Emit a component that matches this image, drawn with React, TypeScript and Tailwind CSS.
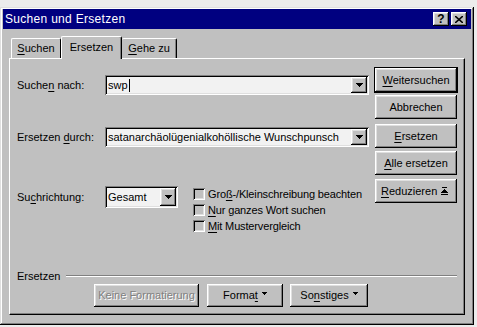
import React from "react";

const RAISED =
  "shadow-[inset_-1px_-1px_0_#000,inset_1px_1px_0_#fff,inset_-2px_-2px_0_#808080,inset_2px_2px_0_#dfdfdf]";

function U({ children }: { children: React.ReactNode }) {
  return <span className="underline underline-offset-[2px] decoration-[1px]">{children}</span>;
}

function Arrow() {
  return (
    <svg width="7" height="4" viewBox="0 0 7 4" className="block">
      <path d="M0 0h7v1H0zM1 1h5v1H1zM2 2h3v1H2zM3 3h1v1H3z" fill="#000" />
    </svg>
  );
}

function SmallArrow() {
  return (
    <svg width="5" height="3" viewBox="0 0 5 3" className="block ml-[4px] mt-[-4px]">
      <path d="M0 0h5v1H0zM1 1h3v1H1zM2 2h1v1H2z" fill="#000" />
    </svg>
  );
}

function ComboInput({ text, cursor = false, w }: { text: string; cursor?: boolean; w: string }) {
  return (
    <div
      className={`${w} h-[20px] bg-[#f2f2f2] flex items-center pl-[3px] pr-[2px] shadow-[inset_1px_1px_0_#808080,inset_-1px_-1px_0_#fff,inset_2px_2px_0_#000,inset_-2px_-2px_0_#dfdfdf]`}
    >
      <span className="flex-1 whitespace-nowrap overflow-hidden leading-[14px] flex items-center">
        {text}
        {cursor && <span className="inline-block w-[1px] h-[13px] bg-black ml-[1px]" />}
      </span>
      <div className={`w-[16px] h-[16px] bg-[#c0c0c0] flex items-center justify-center ${RAISED}`}>
        <Arrow />
      </div>
    </div>
  );
}

function Btn({
  children,
  className = "",
  disabled = false,
}: {
  children: React.ReactNode;
  className?: string;
  disabled?: boolean;
}) {
  return (
    <div
      className={`bg-[#c0c0c0] flex items-center justify-center ${RAISED} ${className} ${
        disabled ? "text-[#808080] [text-shadow:1px_1px_0_#fff]" : "text-black"
      }`}
    >
      {children}
    </div>
  );
}

function Check({ children }: { children: React.ReactNode }) {
  return (
    <div className="h-[16px] flex items-center">
      <div className="w-[12px] h-[12px] bg-[#c0c0c0] shadow-[inset_1px_1px_0_#808080,inset_-1px_-1px_0_#fff,inset_2px_2px_0_#000,inset_-2px_-2px_0_#dfdfdf]" />
      <span className="ml-[3px] whitespace-nowrap tracking-[-0.15px]">{children}</span>
    </div>
  );
}

export default function App() {
  return (
    <div className="w-[477px] h-[327px] bg-[#ececec] pt-[7px] overflow-hidden font-['Liberation_Sans',Arial,sans-serif] text-[11px] text-black">
      <div className="w-[474px] h-[318px] bg-[#c0c0c0] pt-[2px] px-[3px] pb-[3px] flex flex-col shadow-[inset_-1px_-1px_0_#000,inset_1px_1px_0_#dfdfdf,inset_-2px_-2px_0_#808080,inset_2px_2px_0_#fff]">
        {/* Title bar */}
        <div className="h-[20px] bg-[#000080] flex items-center pl-[2px] pr-[4px]">
          <span className="flex-1 text-white text-[12px] tracking-[0.3px] leading-none">Suchen und Ersetzen</span>
          <div className={`w-[16px] h-[14px] bg-[#c0c0c0] flex items-center justify-center text-[12px] font-bold leading-none ${RAISED}`}>
            ?
          </div>
          <div className={`ml-[2px] w-[16px] h-[14px] bg-[#c0c0c0] flex items-center justify-center ${RAISED}`}>
            <svg width="8" height="7" viewBox="0 0 8 7">
              <path d="M0 0l8 7M8 0L0 7" stroke="#000" strokeWidth="1.6" />
            </svg>
          </div>
        </div>

        {/* Body */}
        <div className="flex-1 flex flex-col px-[6px] pt-[7px] pb-[7px]">
          {/* Tabs */}
          <div className="h-[22px] flex items-end pl-[2px]">
            <div className="w-[50px] h-[20px] border-t border-l border-white border-r border-r-black rounded-t-[2px] flex items-center justify-center pb-[1px]">
              <span><U>S</U>uchen</span>
            </div>
            <div className="relative z-10 w-[61px] h-[23px] mb-[-1px] bg-[#c0c0c0] border-t border-l border-white border-r border-r-black rounded-t-[2px] shadow-[inset_-1px_0_0_#808080] flex items-center justify-center pb-[2px]">
              <span>Ersetzen</span>
            </div>
            <div className="w-[55px] h-[20px] border-t border-white border-r border-r-black rounded-t-[2px] shadow-[inset_-1px_0_0_#808080] flex items-center justify-center pb-[1px]">
              <span><U>G</U>ehe zu</span>
            </div>
          </div>

          {/* Panel */}
          <div className="flex-1 flex flex-col border-t border-l border-white border-r border-b border-r-black border-b-black shadow-[inset_-1px_-1px_0_#808080]">
            <div className="flex pl-[7px] pr-[6px]">
              {/* Left column */}
              <div className="flex-1 pt-[16px] flex flex-col">
                <div className="h-[20px] flex items-center">
                  <span className="w-[88px]">Suche<U>n</U> nach:</span>
                  <ComboInput w="w-[264px]" text="swp" cursor />
                </div>
                <div className="mt-[32px] h-[20px] flex items-center">
                  <span className="w-[88px] whitespace-nowrap">Ersetzen <U>d</U>urch:</span>
                  <ComboInput w="w-[264px]" text="satanarchäolügenialkohöllische Wunschpunsch" />
                </div>
                <div className="mt-[39px] flex items-start">
                  <span className="w-[88px] h-[22px] flex items-center">Su<U>c</U>hrichtung:</span>
                  <div className="w-[73px] h-[22px] bg-[#f2f2f2] flex items-center pl-[3px] pr-[2px] shadow-[inset_1px_1px_0_#808080,inset_-1px_-1px_0_#fff,inset_2px_2px_0_#000,inset_-2px_-2px_0_#dfdfdf]">
                    <span className="flex-1">Gesamt</span>
                    <div className={`w-[16px] h-[18px] bg-[#c0c0c0] flex items-center justify-center ${RAISED}`}>
                      <Arrow />
                    </div>
                  </div>
                  <div className="ml-[15px] pt-[0px] flex flex-col">
                    <Check>Gro<U>ß</U>-/Kleinschreibung beachten</Check>
                    <Check><U>N</U>ur ganzes Wort suchen</Check>
                    <Check><U>M</U>it Mustervergleich</Check>
                  </div>
                </div>
              </div>

              {/* Right column */}
              <div className="w-[84px] pt-[8px] flex flex-col items-center">
                <div className="w-[84px] h-[26px] border border-black">
                  <Btn className="w-full h-full">
                    <span><U>W</U>eitersuchen</span>
                  </Btn>
                </div>
                <Btn className="mt-[2px] w-[82px] h-[24px]">Abbrechen</Btn>
                <Btn className="mt-[5px] w-[82px] h-[24px]">
                  <span><U>E</U>rsetzen</span>
                </Btn>
                <Btn className="mt-[3px] w-[82px] h-[24px]">
                  <span><U>A</U>lle ersetzen</span>
                </Btn>
                <Btn className="mt-[4px] w-[82px] h-[24px] !justify-between pl-[6px] pr-[9px]">
                  <span><U>R</U>eduzieren</span>
                  <svg width="7" height="8" viewBox="0 0 7 8" className="block">
                    <path d="M1 0h5v1H1zM3 2h1v1H3zM2 3h3v1H2zM1 4h5v1H1zM0 5h7v1H0zM0 7h7v1H0z" fill="#000" />
                  </svg>
                </Btn>
              </div>
            </div>

            <div className="flex-1" />

            {/* Group: Ersetzen */}
            <div className="flex flex-col pl-[7px] pr-[7px] pb-[7px]">
              <div className="h-[12px] flex items-center">
                <span>Ersetzen</span>
                <div className="flex-1 ml-[6px] h-[2px] border-t border-[#808080] border-b border-b-white" />
              </div>
              <div className="mt-[2px] flex ml-[77px]">
                <Btn disabled className="w-[105px] h-[23px]">Keine Formatierung</Btn>
                <Btn className="ml-[8px] w-[76px] h-[23px]">
                  <span>Forma<U>t</U></span>
                  <SmallArrow />
                </Btn>
                <Btn className="ml-[7px] w-[78px] h-[23px]">
                  <span>So<U>n</U>stiges</span>
                  <SmallArrow />
                </Btn>
              </div>
            </div>
          </div>
        </div>
      </div>
    </div>
  );
}
